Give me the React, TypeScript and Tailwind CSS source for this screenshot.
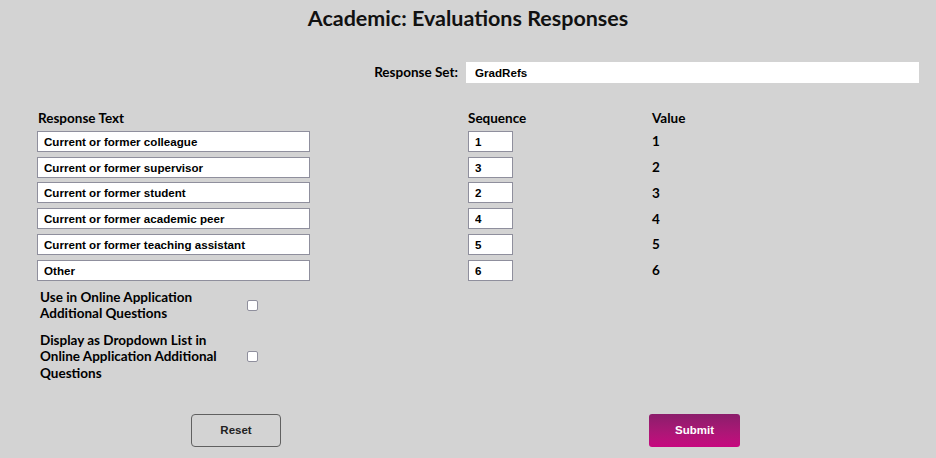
import React from 'react';

type ResponseRow = {
  text: string;
  sequence: string;
  value: string;
};

const rows: ResponseRow[] = [
  { text: 'Current or former colleague', sequence: '1', value: '1' },
  { text: 'Current or former supervisor', sequence: '3', value: '2' },
  { text: 'Current or former student', sequence: '2', value: '3' },
  { text: 'Current or former academic peer', sequence: '4', value: '4' },
  { text: 'Current or former teaching assistant', sequence: '5', value: '5' },
  { text: 'Other', sequence: '6', value: '6' },
];

const heading = "font-['Lato',sans-serif] font-bold text-[13.5px] text-black";
const field =
  "block h-[21px] border border-[#8f8f9d] bg-white px-[6px] font-['Liberation_Sans',Arial,sans-serif] text-[11.6px] font-bold text-black outline-none";

export default function App() {
  return (
    <div className="min-h-[458px] w-[936px] bg-[#d3d3d3]">
      <h1 className="pt-[5px] text-center font-['Lato',sans-serif] text-[21.5px] font-bold leading-[26px] text-[#111]">
        Academic: Evaluations Responses
      </h1>

      <div className="mt-[31px] flex items-center justify-end gap-[8px] pr-[17px]">
        <label className={heading}>Response Set:</label>
        <input readOnly value="GradRefs" className={`${field} w-[453px] border-white pl-[8px]`} />
      </div>

      <div className="mt-[27px] grid grid-cols-[431px_184px_1fr] gap-y-[4.8px] pl-[37px]">
        <div className={`${heading} pl-[1px] leading-[16px]`}>Response Text</div>
        <div className={`${heading} leading-[16px]`}>Sequence</div>
        <div className={`${heading} leading-[16px]`}>Value</div>
        {rows.map((row) => (
          <React.Fragment key={row.text}>
            <input readOnly value={row.text} className={`${field} w-[273px]`} />
            <input readOnly value={row.sequence} className={`${field} w-[45px]`} />
            <div className={`${heading} flex h-[21px] items-center`}>{row.value}</div>
          </React.Fragment>
        ))}
      </div>

      <div className="mt-[8px] flex flex-col gap-[10px] pl-[40px]">
        <div className="flex items-center">
          <span className={`${heading} w-[200px] leading-[16.5px]`}>
            Use in Online Application
            <br />
            Additional Questions
          </span>
          <input type="checkbox" className="ml-[7px] h-[11px] w-[11px] appearance-none rounded-[2px] border border-[#8f8f9d] bg-white" />
        </div>
        <div className="flex items-center">
          <span className={`${heading} w-[200px] leading-[16.5px]`}>
            Display as Dropdown List in
            <br />
            Online Application Additional
            <br />
            Questions
          </span>
          <input type="checkbox" className="ml-[7px] h-[11px] w-[11px] appearance-none rounded-[2px] border border-[#8f8f9d] bg-white" />
        </div>
      </div>

      <div className="mt-[33px] flex gap-[368px] pl-[191px]">
        <button className="h-[33px] w-[90px] rounded-[4px] border border-[#606060] bg-transparent font-['Liberation_Sans',Arial,sans-serif] text-[11.5px] font-bold text-[#222]">
          Reset
        </button>
        <button className="h-[33px] w-[91px] rounded-[3px] bg-gradient-to-b from-[#8b1d6b] to-[#c7067f] font-['Liberation_Sans',Arial,sans-serif] text-[11.5px] font-bold text-white">
          Submit
        </button>
      </div>
    </div>
  );
}
